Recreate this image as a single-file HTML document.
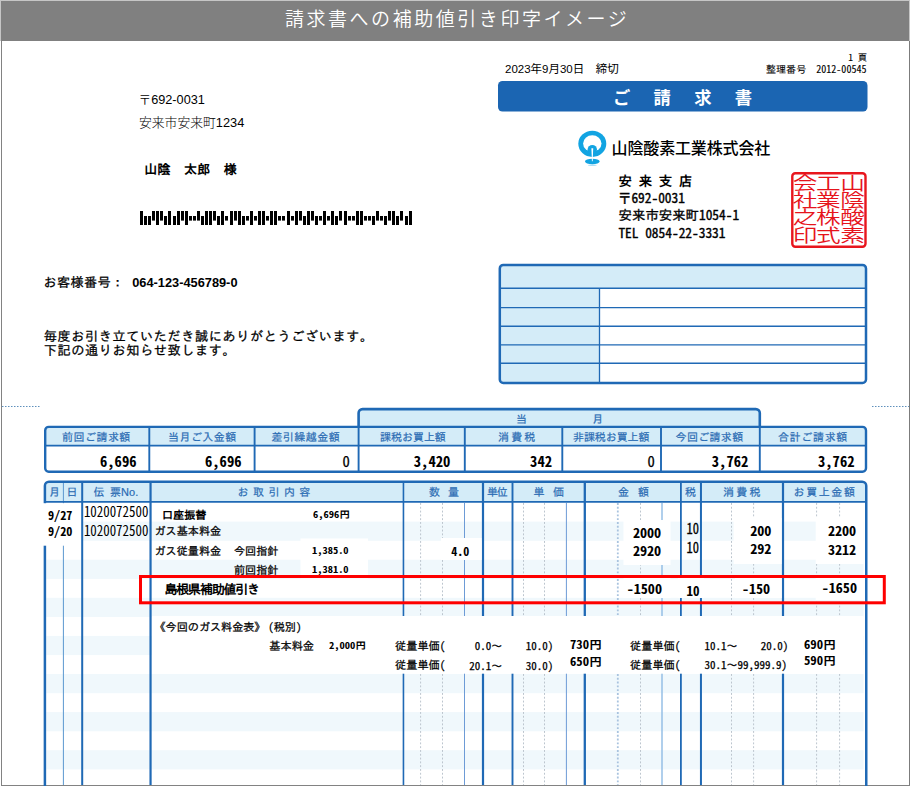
<!DOCTYPE html>
<html lang="ja"><head><meta charset="utf-8"><title>請求書への補助値引き印字イメージ</title>
<style>
html,body{margin:0;padding:0;background:#fff;}
#pg{position:relative;width:910px;height:786px;overflow:hidden;background:#fff;}
#pg svg{position:absolute;left:0;top:0;}
.t{position:absolute;white-space:pre;margin:0;padding:0;}
.n{font-family:'Noto Sans Mono CJK JP','IPAGothic',monospace;line-height:0;}
.a{font-family:'Liberation Sans',sans-serif;line-height:0;}
</style></head><body>
<div id="pg">
<svg width="910" height="786" viewBox="0 0 910 786">
<rect x="0" y="0" width="910" height="786" fill="#fff" />
<rect x="0" y="0" width="910" height="41" fill="#c6c6c6" />
<rect x="1" y="1" width="908" height="40" fill="#808080" />
<rect x="1" y="41" width="1" height="745" fill="#828282" />
<rect x="909" y="41" width="1" height="745" fill="#7c7c7c" />
<rect x="1" y="785" width="909" height="1" fill="#828282" />
<rect x="498" y="81" width="369.5" height="30.5" fill="#1b65b2" rx="4.5"/>
<g><ellipse cx="592.3" cy="143.8" rx="14" ry="13.1" fill="#12a4e2"/><ellipse cx="592.3" cy="143.5" rx="9.2" ry="8.3" fill="#fff"/><circle cx="592.3" cy="149.6" r="4.7" fill="#12a4e2"/><ellipse cx="592.3" cy="161.5" rx="7.3" ry="2.7" fill="#12a4e2"/><ellipse cx="592.3" cy="165.2" rx="4.5" ry="0.7" fill="#12a4e2" opacity="0.35"/><path d="M591.4 148.2H593.2L592.7 161.2H591.9z" fill="#fff"/></g>
<rect x="140" y="211" width="3" height="14" fill="#000" />
<rect x="144" y="216" width="3" height="9" fill="#000" />
<rect x="148" y="216" width="3" height="9" fill="#000" />
<rect x="152" y="211" width="3" height="9.6" fill="#000" />
<rect x="156" y="211" width="3" height="14" fill="#000" />
<rect x="160" y="211" width="3" height="9.6" fill="#000" />
<rect x="164" y="216" width="3" height="9" fill="#000" />
<rect x="168" y="211" width="3" height="14" fill="#000" />
<rect x="173" y="216" width="3" height="9" fill="#000" />
<rect x="177" y="211" width="3" height="14" fill="#000" />
<rect x="181" y="211" width="3" height="9.6" fill="#000" />
<rect x="185" y="211" width="3" height="14" fill="#000" />
<rect x="189" y="216" width="3" height="4.6" fill="#000" />
<rect x="193" y="216" width="3" height="4.6" fill="#000" />
<rect x="197" y="211" width="3" height="9.6" fill="#000" />
<rect x="201" y="216" width="3" height="9" fill="#000" />
<rect x="205" y="211" width="3" height="14" fill="#000" />
<rect x="209" y="211" width="3" height="14" fill="#000" />
<rect x="213" y="211" width="3" height="9.6" fill="#000" />
<rect x="217" y="216" width="3" height="9" fill="#000" />
<rect x="221" y="211" width="3" height="14" fill="#000" />
<rect x="225" y="216" width="3" height="4.6" fill="#000" />
<rect x="230" y="211" width="3" height="14" fill="#000" />
<rect x="234" y="211" width="3" height="9.6" fill="#000" />
<rect x="238" y="211" width="3" height="14" fill="#000" />
<rect x="242" y="216" width="3" height="9" fill="#000" />
<rect x="246" y="216" width="3" height="4.6" fill="#000" />
<rect x="250" y="211" width="3" height="14" fill="#000" />
<rect x="254" y="216" width="3" height="4.6" fill="#000" />
<rect x="258" y="211" width="3" height="14" fill="#000" />
<rect x="262" y="211" width="3" height="14" fill="#000" />
<rect x="266" y="216" width="3" height="4.6" fill="#000" />
<rect x="270" y="211" width="3" height="14" fill="#000" />
<rect x="274" y="211" width="3" height="14" fill="#000" />
<rect x="278" y="216" width="3" height="4.6" fill="#000" />
<rect x="282" y="216" width="3" height="4.6" fill="#000" />
<rect x="287" y="211" width="3" height="14" fill="#000" />
<rect x="291" y="216" width="3" height="4.6" fill="#000" />
<rect x="295" y="211" width="3" height="14" fill="#000" />
<rect x="299" y="211" width="3" height="9.6" fill="#000" />
<rect x="303" y="216" width="3" height="9" fill="#000" />
<rect x="307" y="211" width="3" height="14" fill="#000" />
<rect x="311" y="211" width="3" height="9.6" fill="#000" />
<rect x="315" y="216" width="3" height="9" fill="#000" />
<rect x="319" y="216" width="3" height="4.6" fill="#000" />
<rect x="323" y="211" width="3" height="14" fill="#000" />
<rect x="327" y="216" width="3" height="4.6" fill="#000" />
<rect x="331" y="211" width="3" height="14" fill="#000" />
<rect x="335" y="216" width="3" height="9" fill="#000" />
<rect x="339" y="211" width="3" height="9.6" fill="#000" />
<rect x="344" y="211" width="3" height="14" fill="#000" />
<rect x="348" y="216" width="3" height="4.6" fill="#000" />
<rect x="352" y="216" width="3" height="4.6" fill="#000" />
<rect x="356" y="211" width="3" height="14" fill="#000" />
<rect x="360" y="211" width="3" height="14" fill="#000" />
<rect x="364" y="216" width="3" height="4.6" fill="#000" />
<rect x="368" y="216" width="3" height="4.6" fill="#000" />
<rect x="372" y="216" width="3" height="9" fill="#000" />
<rect x="376" y="211" width="3" height="9.6" fill="#000" />
<rect x="380" y="216" width="3" height="4.6" fill="#000" />
<rect x="384" y="216" width="3" height="9" fill="#000" />
<rect x="388" y="211" width="3" height="9.6" fill="#000" />
<rect x="392" y="211" width="3" height="14" fill="#000" />
<rect x="396" y="216" width="3" height="9" fill="#000" />
<rect x="400" y="211" width="3" height="9.6" fill="#000" />
<rect x="405" y="216" width="3" height="9" fill="#000" />
<rect x="409" y="211" width="3" height="14" fill="#000" />
<rect x="499.8" y="264.9" width="366.2" height="118.10000000000002" fill="#fff" rx="4"/>
<path d="M499.8 268.9a4 4 0 0 1 4 -4H862.0a4 4 0 0 1 4 4V288H499.8z" fill="#d4ecf8"/>
<path d="M499.8 288H599.5V383.0H503.8a4 4 0 0 1 -4 -4z" fill="#d4ecf8"/>
<line x1="499.8" y1="288.2" x2="866.0" y2="288.2" stroke="#1f69b5" stroke-width="1.4" />
<line x1="499.8" y1="307.6" x2="866.0" y2="307.6" stroke="#1f69b5" stroke-width="1.4" />
<line x1="499.8" y1="326.3" x2="866.0" y2="326.3" stroke="#1f69b5" stroke-width="1.4" />
<line x1="499.8" y1="344.9" x2="866.0" y2="344.9" stroke="#1f69b5" stroke-width="1.4" />
<line x1="499.8" y1="363.3" x2="866.0" y2="363.3" stroke="#1f69b5" stroke-width="1.4" />
<line x1="599.5" y1="288" x2="599.5" y2="383.0" stroke="#1f69b5" stroke-width="1.3" />
<rect x="499.8" y="264.9" width="366.2" height="118.10000000000002" rx="3.5" fill="none" stroke="#1f69b5" stroke-width="2.5"/>
<line x1="2" y1="406.5" x2="41" y2="406.5" stroke="#5f90bc" stroke-width="1" stroke-dasharray="1.5 1.5"/>
<line x1="872" y1="406.5" x2="909" y2="406.5" stroke="#5f90bc" stroke-width="1" stroke-dasharray="1.5 1.5"/>
<path d="M358.6 430V413.1a4 4 0 0 1 4 -4H755.8a4 4 0 0 1 4 4V430z" fill="#d4ecf8" stroke="#1f69b5" stroke-width="2.6"/>
<rect x="45.2" y="426.9" width="820.8" height="44.80000000000001" fill="#fff" rx="4"/>
<path d="M45.2 445.6V430.9a4 4 0 0 1 4 -4H862.0a4 4 0 0 1 4 4V445.6z" fill="#d4ecf8"/>
<line x1="45.2" y1="445.6" x2="866.0" y2="445.6" stroke="#1f69b5" stroke-width="1.6" />
<line x1="149.3" y1="426.9" x2="149.3" y2="471.7" stroke="#1f69b5" stroke-width="1.9" />
<line x1="254.6" y1="426.9" x2="254.6" y2="471.7" stroke="#1f69b5" stroke-width="1.9" />
<line x1="358.6" y1="426.9" x2="358.6" y2="471.7" stroke="#1f69b5" stroke-width="1.9" />
<line x1="464.8" y1="426.9" x2="464.8" y2="471.7" stroke="#1f69b5" stroke-width="1.9" />
<line x1="562.3" y1="426.9" x2="562.3" y2="471.7" stroke="#1f69b5" stroke-width="1.9" />
<line x1="661.0" y1="426.9" x2="661.0" y2="471.7" stroke="#1f69b5" stroke-width="1.9" />
<line x1="759.8" y1="426.9" x2="759.8" y2="471.7" stroke="#1f69b5" stroke-width="1.9" />
<rect x="45.2" y="426.9" width="820.8" height="44.80000000000001" rx="3.5" fill="none" stroke="#1f69b5" stroke-width="2.4"/>
<rect x="46.3" y="521.6" width="817.3" height="19.2" fill="#f0f8fc" />
<rect x="46.3" y="559.7" width="817.3" height="19.2" fill="#f0f8fc" />
<rect x="46.3" y="597.8" width="817.3" height="19.2" fill="#f0f8fc" />
<rect x="46.3" y="635.9" width="817.3" height="19.2" fill="#f0f8fc" />
<rect x="46.3" y="674.0" width="817.3" height="19.2" fill="#f0f8fc" />
<rect x="46.3" y="712.1" width="817.3" height="19.2" fill="#f0f8fc" />
<rect x="46.3" y="750.2" width="817.3" height="19.2" fill="#f0f8fc" />
<path d="M44.9 501.8V485.8a4 4 0 0 1 4 -4H862.25a4 4 0 0 1 4 4V501.8z" fill="#d4ecf8"/>
<line x1="63.4" y1="481.8" x2="63.4" y2="785" stroke="#5b97cf" stroke-width="1" />
<line x1="464.5" y1="503" x2="464.5" y2="785" stroke="#6d9bd6" stroke-width="1" />
<line x1="566.4" y1="503" x2="566.4" y2="785" stroke="#6d9bd6" stroke-width="1" />
<line x1="662.0" y1="503" x2="662.0" y2="785" stroke="#8fbbe4" stroke-width="1.4" />
<line x1="420.6" y1="503" x2="420.6" y2="785" stroke="#bcc5ce" stroke-width="1" stroke-dasharray="1.9 1.9"/>
<line x1="442.5" y1="503" x2="442.5" y2="785" stroke="#bcc5ce" stroke-width="1" stroke-dasharray="1.9 1.9"/>
<line x1="523.5" y1="503" x2="523.5" y2="785" stroke="#bcc5ce" stroke-width="1" stroke-dasharray="1.9 1.9"/>
<line x1="544.5" y1="503" x2="544.5" y2="785" stroke="#bcc5ce" stroke-width="1" stroke-dasharray="1.9 1.9"/>
<line x1="640.5" y1="503" x2="640.5" y2="785" stroke="#bcc5ce" stroke-width="1" stroke-dasharray="1.9 1.9"/>
<line x1="731.5" y1="503" x2="731.5" y2="785" stroke="#bcc5ce" stroke-width="1" stroke-dasharray="1.9 1.9"/>
<line x1="753.6" y1="503" x2="753.6" y2="785" stroke="#bcc5ce" stroke-width="1" stroke-dasharray="1.9 1.9"/>
<line x1="816.6" y1="503" x2="816.6" y2="785" stroke="#bcc5ce" stroke-width="1" stroke-dasharray="1.9 1.9"/>
<line x1="839.6" y1="503" x2="839.6" y2="785" stroke="#bcc5ce" stroke-width="1" stroke-dasharray="1.9 1.9"/>
<line x1="617.8" y1="503" x2="617.8" y2="785" stroke="#a9c3df" stroke-width="1.8" stroke-dasharray="1.9 1.9"/>
<line x1="82.2" y1="481.8" x2="82.2" y2="785" stroke="#1f69b5" stroke-width="2.0" />
<line x1="150.55" y1="481.8" x2="150.55" y2="785" stroke="#1f69b5" stroke-width="2.2" />
<line x1="403.45" y1="481.8" x2="403.45" y2="785" stroke="#1f69b5" stroke-width="1.6" />
<line x1="483.0" y1="481.8" x2="483.0" y2="785" stroke="#1f69b5" stroke-width="2.2" />
<line x1="512.5" y1="481.8" x2="512.5" y2="785" stroke="#1f69b5" stroke-width="1.9" />
<line x1="584.8" y1="481.8" x2="584.8" y2="785" stroke="#1f69b5" stroke-width="2.3" />
<line x1="680.9" y1="481.8" x2="680.9" y2="785" stroke="#1f69b5" stroke-width="1.8" />
<line x1="700.95" y1="481.8" x2="700.95" y2="785" stroke="#1f69b5" stroke-width="2.0" />
<line x1="783.0" y1="481.8" x2="783.0" y2="785" stroke="#1f69b5" stroke-width="2.2" />
<line x1="44.9" y1="501.9" x2="866.25" y2="501.9" stroke="#1f69b5" stroke-width="1.7" />
<path d="M44.9 786V485.8a4 4 0 0 1 4 -4H862.25a4 4 0 0 1 4 4V786" fill="none" stroke="#1f69b5" stroke-width="2.5"/>
<rect x="40" y="503.2" width="41" height="42.5" fill="#fff" />
<rect x="152" y="616" width="711.5" height="57.7" fill="#fff" />
<rect x="300.5" y="538.5" width="67.5" height="40" fill="#fff" />
<rect x="623.5" y="520" width="47" height="45" fill="#fff" />
<rect x="441" y="538" width="40.5" height="22" fill="#fff" />
<rect x="733.6" y="518" width="48" height="46" fill="#fff" />
<rect x="815.7" y="518" width="48" height="46" fill="#fff" />
<rect x="623.5" y="578" width="47" height="20" fill="#fff" />
<rect x="678" y="577" width="26" height="21" fill="#fff" />
<rect x="735" y="578" width="46.6" height="20" fill="#fff" />
<rect x="815.7" y="578" width="48" height="22" fill="#fff" />
<rect x="140.5" y="576.5" width="743.8" height="26.3" fill="none" stroke="#fe0000" stroke-width="3"/>
<g><rect x="792.3" y="173.2" width="73.2" height="73.6" rx="3" fill="none" stroke="#e8161d" stroke-width="2.4"/></g>
<g font-family="'Liberation Sans','Noto Sans CJK JP',sans-serif" font-size="17" font-weight="350" fill="#e6141c"><text transform="translate(852.5 189.7) scale(1.45 1.04)" text-anchor="middle">山</text><text transform="translate(852.5 207.0) scale(1.45 1.04)" text-anchor="middle">陰</text><text transform="translate(852.5 224.3) scale(1.45 1.04)" text-anchor="middle">酸</text><text transform="translate(852.5 241.6) scale(1.45 1.04)" text-anchor="middle">素</text><text transform="translate(828.4 189.7) scale(1.45 1.04)" text-anchor="middle">工</text><text transform="translate(828.4 207.0) scale(1.45 1.04)" text-anchor="middle">業</text><text transform="translate(828.4 224.3) scale(1.45 1.04)" text-anchor="middle">株</text><text transform="translate(828.4 241.6) scale(1.45 1.04)" text-anchor="middle">式</text><text transform="translate(805.1 189.7) scale(1.45 1.04)" text-anchor="middle">会</text><text transform="translate(805.1 207.0) scale(1.45 1.04)" text-anchor="middle">社</text><text transform="translate(805.1 224.3) scale(1.45 1.04)" text-anchor="middle">之</text><text transform="translate(805.1 241.6) scale(1.45 1.04)" text-anchor="middle">印</text></g>
</svg>
<div class="t" style="top:7.2px;line-height:26.6px;font-size:19px;font-family:'Liberation Sans','Noto Sans CJK JP',sans-serif;color:#fff;letter-spacing:2.55px;left:257.1px;width:400px;text-align:center;font-weight:350;">請求書への補助値引き印字イメージ</div>
<div class="t" style="top:61.45px;line-height:16.1px;font-size:11.5px;font-family:'Liberation Sans','Noto Sans CJK JP',sans-serif;color:#000;left:505px;">2023年9月30日　締切</div>
<div class="t" style="top:51.45px;line-height:13.3px;font-size:9.5px;font-family:'IPAGothic','Liberation Mono',monospace;color:#000;right:42.8px;-webkit-text-stroke:0.1px #000;"><span class="n">1 </span>頁</div>
<div class="t" style="top:61.75px;line-height:14.1px;font-size:10.05px;font-family:'IPAGothic','Liberation Mono',monospace;color:#000;right:43.5px;-webkit-text-stroke:0.12px #000;">整理番号　<span class="n">2012-00545</span></div>
<div class="t" style="top:85.8px;line-height:24.2px;font-size:17.3px;font-family:'Liberation Sans','Noto Sans CJK JP',sans-serif;color:#fff;font-weight:bold;letter-spacing:3.0px;left:484px;width:400px;text-align:center;">ご　請　求　書</div>
<div class="t" style="top:138.1px;line-height:22.4px;font-size:16px;font-family:'Liberation Sans','Noto Sans CJK JP',sans-serif;color:#000;letter-spacing:-0.15px;left:611.6px;font-weight:500;">山陰酸素工業株式会社</div>
<div class="t" style="top:172.1px;line-height:18.8px;font-size:13.4px;font-family:'IPAGothic','Liberation Mono',monospace;color:#000;font-weight:bold;left:618.6px;">安<span class="n"> </span>来<span class="n"> </span>支<span class="n"> </span>店</div>
<div class="t" style="top:188.6px;line-height:18.8px;font-size:13.4px;font-family:'IPAGothic','Liberation Mono',monospace;color:#000;left:618px;-webkit-text-stroke:0.35px #000;">〒<span class="n">692-0031</span></div>
<div class="t" style="top:206.2px;line-height:18.8px;font-size:13.4px;font-family:'IPAGothic','Liberation Mono',monospace;color:#000;left:618.6px;-webkit-text-stroke:0.35px #000;">安来市安来町<span class="n">1054-1</span></div>
<div class="t" style="top:223.7px;line-height:18.8px;font-size:13.4px;font-family:'IPAGothic','Liberation Mono',monospace;color:#000;left:618.4px;-webkit-text-stroke:0.35px #000;"><span class="n">TEL 0854-22-3331</span></div>
<div class="t" style="top:92.4px;line-height:17.8px;font-size:12.7px;font-family:'Liberation Sans','Noto Sans CJK JP',sans-serif;color:#000;left:138.5px;font-weight:300;">〒692-0031</div>
<div class="t" style="top:114.05px;line-height:17.9px;font-size:12.8px;font-family:'Liberation Sans','Noto Sans CJK JP',sans-serif;color:#000;left:139px;font-weight:300;">安来市安来町1234</div>
<div class="t" style="top:161.1px;line-height:18.2px;font-size:13px;font-family:'IPAGothic','Liberation Mono',monospace;color:#000;font-weight:bold;letter-spacing:0.25px;left:144.3px;">山陰　太郎　様</div>
<div class="t" style="top:273.45px;line-height:18.5px;font-size:13.2px;font-family:'IPAGothic','Liberation Mono',monospace;color:#000;letter-spacing:0.3px;left:43.5px;-webkit-text-stroke:0.25px #000;">お客様番号：</div>
<div class="t" style="top:273.95px;line-height:17.9px;font-size:12.8px;font-family:'Liberation Sans','Noto Sans CJK JP',sans-serif;color:#000;font-weight:bold;left:132.2px;">064-123-456789-0</div>
<div class="t" style="top:327.15px;line-height:18.5px;font-size:13.2px;font-family:'IPAGothic','Liberation Mono',monospace;color:#000;letter-spacing:0.56px;left:43.7px;-webkit-text-stroke:0.25px #000;">毎度お引き立ていただき誠にありがとうございます。</div>
<div class="t" style="top:341.45px;line-height:18.5px;font-size:13.2px;font-family:'IPAGothic','Liberation Mono',monospace;color:#000;letter-spacing:0.56px;left:43.7px;-webkit-text-stroke:0.25px #000;">下記の通りお知らせ致します。</div>
<div class="t" style="top:410.8px;line-height:15.4px;font-size:11px;font-family:'IPAGothic','Liberation Mono',monospace;color:#2a6bb3;letter-spacing:0.6px;left:321.79999999999995px;width:400px;text-align:center;-webkit-text-stroke:0.2px #2a6bb3;">当</div>
<div class="t" style="top:410.8px;line-height:15.4px;font-size:11px;font-family:'IPAGothic','Liberation Mono',monospace;color:#2a6bb3;letter-spacing:0.6px;left:398.0999999999999px;width:400px;text-align:center;-webkit-text-stroke:0.2px #2a6bb3;">月</div>
<div class="t" style="top:429.1px;line-height:15.4px;font-size:11px;font-family:'IPAGothic','Liberation Mono',monospace;color:#2a6bb3;letter-spacing:0.45px;left:62.12px;-webkit-text-stroke:0.2px #2a6bb3;">前回ご請求額</div>
<div class="t" style="top:429.1px;line-height:15.4px;font-size:11px;font-family:'IPAGothic','Liberation Mono',monospace;color:#2a6bb3;letter-spacing:0.45px;left:168.02px;-webkit-text-stroke:0.2px #2a6bb3;">当月ご入金額</div>
<div class="t" style="top:429.1px;line-height:15.4px;font-size:11px;font-family:'IPAGothic','Liberation Mono',monospace;color:#2a6bb3;letter-spacing:0.45px;left:271.42px;-webkit-text-stroke:0.2px #2a6bb3;">差引繰越金額</div>
<div class="t" style="top:429.1px;line-height:15.4px;font-size:11px;font-family:'IPAGothic','Liberation Mono',monospace;color:#2a6bb3;letter-spacing:-0.05px;left:380.12px;-webkit-text-stroke:0.2px #2a6bb3;">課税お買上額</div>
<div class="t" style="top:429.1px;line-height:15.4px;font-size:11px;font-family:'IPAGothic','Liberation Mono',monospace;color:#2a6bb3;letter-spacing:2.03px;left:498.12px;-webkit-text-stroke:0.2px #2a6bb3;">消費税</div>
<div class="t" style="top:429.1px;line-height:15.4px;font-size:11px;font-family:'IPAGothic','Liberation Mono',monospace;color:#2a6bb3;letter-spacing:-0.12px;left:573.12px;-webkit-text-stroke:0.2px #2a6bb3;">非課税お買上額</div>
<div class="t" style="top:429.1px;line-height:15.4px;font-size:11px;font-family:'IPAGothic','Liberation Mono',monospace;color:#2a6bb3;letter-spacing:0.31px;left:675.62px;-webkit-text-stroke:0.2px #2a6bb3;">今回ご請求額</div>
<div class="t" style="top:429.1px;line-height:15.4px;font-size:11px;font-family:'IPAGothic','Liberation Mono',monospace;color:#2a6bb3;letter-spacing:0.69px;left:777.91px;-webkit-text-stroke:0.2px #2a6bb3;">合計ご請求額</div>
<div class="t" style="top:451.8px;line-height:20.4px;font-size:14.6px;font-family:'IPAGothic','Liberation Mono',monospace;color:#000;font-weight:bold;right:773.5px;"><span class="n">6,696</span></div>
<div class="t" style="top:451.8px;line-height:20.4px;font-size:14.6px;font-family:'IPAGothic','Liberation Mono',monospace;color:#000;font-weight:bold;right:668.5px;"><span class="n">6,696</span></div>
<div class="t" style="top:451.8px;line-height:20.4px;font-size:14.6px;font-family:'IPAGothic','Liberation Mono',monospace;color:#000;right:560.2px;-webkit-text-stroke:0.25px #000;"><span class="n">0</span></div>
<div class="t" style="top:451.8px;line-height:20.4px;font-size:14.6px;font-family:'IPAGothic','Liberation Mono',monospace;color:#000;font-weight:bold;right:459.7px;"><span class="n">3,420</span></div>
<div class="t" style="top:451.8px;line-height:20.4px;font-size:14.6px;font-family:'IPAGothic','Liberation Mono',monospace;color:#000;font-weight:bold;right:358px;"><span class="n">342</span></div>
<div class="t" style="top:451.8px;line-height:20.4px;font-size:14.6px;font-family:'IPAGothic','Liberation Mono',monospace;color:#000;right:255.2px;-webkit-text-stroke:0.25px #000;"><span class="n">0</span></div>
<div class="t" style="top:451.8px;line-height:20.4px;font-size:14.6px;font-family:'IPAGothic','Liberation Mono',monospace;color:#000;font-weight:bold;right:161.7px;"><span class="n">3,762</span></div>
<div class="t" style="top:451.8px;line-height:20.4px;font-size:14.6px;font-family:'IPAGothic','Liberation Mono',monospace;color:#000;font-weight:bold;right:55.5px;"><span class="n">3,762</span></div>
<div class="t" style="top:484.1px;line-height:15.4px;font-size:11px;font-family:'IPAGothic','Liberation Mono',monospace;color:#2a6bb3;left:-145.5px;width:400px;text-align:center;-webkit-text-stroke:0.2px #2a6bb3;">月</div>
<div class="t" style="top:484.1px;line-height:15.4px;font-size:11px;font-family:'IPAGothic','Liberation Mono',monospace;color:#2a6bb3;left:-127.9px;width:400px;text-align:center;-webkit-text-stroke:0.2px #2a6bb3;">日</div>
<div class="t" style="top:484.1px;line-height:15.4px;font-size:11px;font-family:'IPAGothic','Liberation Mono',monospace;color:#2a6bb3;left:490.4px;width:400px;text-align:center;-webkit-text-stroke:0.2px #2a6bb3;">税</div>
<div class="t" style="top:484.1px;line-height:15.4px;font-size:11px;font-family:'IPAGothic','Liberation Mono',monospace;color:#2a6bb3;left:93.6px;-webkit-text-stroke:0.2px #2a6bb3;">伝 票<span class="a">No.</span></div>
<div class="t" style="top:484.1px;line-height:15.4px;font-size:11px;font-family:'IPAGothic','Liberation Mono',monospace;color:#2a6bb3;letter-spacing:4.44px;left:237.62px;-webkit-text-stroke:0.2px #2a6bb3;">お取引内容</div>
<div class="t" style="top:484.1px;line-height:15.4px;font-size:11px;font-family:'IPAGothic','Liberation Mono',monospace;color:#2a6bb3;letter-spacing:7.97px;left:428.92px;-webkit-text-stroke:0.2px #2a6bb3;">数量</div>
<div class="t" style="top:484.1px;line-height:15.4px;font-size:11px;font-family:'IPAGothic','Liberation Mono',monospace;color:#2a6bb3;letter-spacing:-1.23px;left:486.92px;-webkit-text-stroke:0.2px #2a6bb3;">単位</div>
<div class="t" style="top:484.1px;line-height:15.4px;font-size:11px;font-family:'IPAGothic','Liberation Mono',monospace;color:#2a6bb3;letter-spacing:8.27px;left:533.62px;-webkit-text-stroke:0.2px #2a6bb3;">単価</div>
<div class="t" style="top:484.1px;line-height:15.4px;font-size:11px;font-family:'IPAGothic','Liberation Mono',monospace;color:#2a6bb3;letter-spacing:8.77px;left:618.12px;-webkit-text-stroke:0.2px #2a6bb3;">金額</div>
<div class="t" style="top:484.1px;line-height:15.4px;font-size:11px;font-family:'IPAGothic','Liberation Mono',monospace;color:#2a6bb3;letter-spacing:2.24px;left:722.91px;-webkit-text-stroke:0.2px #2a6bb3;">消費税</div>
<div class="t" style="top:484.1px;line-height:15.4px;font-size:11px;font-family:'IPAGothic','Liberation Mono',monospace;color:#2a6bb3;letter-spacing:1.57px;left:793.62px;-webkit-text-stroke:0.2px #2a6bb3;">お買上金額</div>
<div class="t" style="top:506.95px;line-height:17.1px;font-size:12.2px;font-family:'IPAGothic','Liberation Mono',monospace;color:#000;font-weight:bold;left:48px;"><span class="n">9/27</span></div>
<div class="t" style="top:523.05px;line-height:17.1px;font-size:12.2px;font-family:'IPAGothic','Liberation Mono',monospace;color:#000;font-weight:bold;left:48px;"><span class="n">9/20</span></div>
<div class="t" style="top:504.25px;line-height:18.1px;font-size:12.9px;font-family:'IPAGothic','Liberation Mono',monospace;color:#000;left:83.9px;transform:scale(1,1.1);transform-origin:left center;-webkit-text-stroke:0;"><span class="n">1020072500</span></div>
<div class="t" style="top:522.65px;line-height:18.1px;font-size:12.9px;font-family:'IPAGothic','Liberation Mono',monospace;color:#000;left:83.9px;transform:scale(1,1.1);transform-origin:left center;-webkit-text-stroke:0;"><span class="n">1020072500</span></div>
<div class="t" style="top:507.25px;line-height:15.5px;font-size:11.1px;font-family:'IPAGothic','Liberation Mono',monospace;color:#000;font-weight:bold;left:162px;">口座振替</div>
<div class="t" style="top:508.1px;line-height:13.4px;font-size:9.6px;font-family:'IPAGothic','Liberation Mono',monospace;color:#000;font-weight:bold;left:312.6px;transform:scale(1.1,1);transform-origin:left center;"><span class="n">6,696</span>円</div>
<div class="t" style="top:523.25px;line-height:15.5px;font-size:11.1px;font-family:'IPAGothic','Liberation Mono',monospace;color:#000;left:154.5px;-webkit-text-stroke:0.25px #000;">ガス基本料金</div>
<div class="t" style="top:543.25px;line-height:15.5px;font-size:11.1px;font-family:'IPAGothic','Liberation Mono',monospace;color:#000;left:154.5px;-webkit-text-stroke:0.25px #000;">ガス従量料金</div>
<div class="t" style="top:543.25px;line-height:15.5px;font-size:11.1px;font-family:'IPAGothic','Liberation Mono',monospace;color:#000;left:234px;-webkit-text-stroke:0.25px #000;">今回指針</div>
<div class="t" style="top:561.85px;line-height:15.5px;font-size:11.1px;font-family:'IPAGothic','Liberation Mono',monospace;color:#000;left:234px;-webkit-text-stroke:0.25px #000;">前回指針</div>
<div class="t" style="top:543.65px;line-height:13.3px;font-size:9.5px;font-family:'IPAGothic','Liberation Mono',monospace;color:#000;font-weight:bold;left:312.4px;transform:scale(1.1,1);transform-origin:left center;"><span class="n">1,385.0</span></div>
<div class="t" style="top:562.55px;line-height:13.3px;font-size:9.5px;font-family:'IPAGothic','Liberation Mono',monospace;color:#000;font-weight:bold;left:312.4px;transform:scale(1.1,1);transform-origin:left center;"><span class="n">1,381.0</span></div>
<div class="t" style="top:542.6px;line-height:16.8px;font-size:12px;font-family:'IPAGothic','Liberation Mono',monospace;color:#000;font-weight:bold;right:440.7px;"><span class="n">4.0</span></div>
<div class="t" style="top:524.0px;line-height:19.0px;font-size:13.6px;font-family:'IPAGothic','Liberation Mono',monospace;color:#000;font-weight:bold;right:248.7px;transform:scale(1.04,1);transform-origin:right center;"><span class="n">2000</span></div>
<div class="t" style="top:542.2px;line-height:19.0px;font-size:13.6px;font-family:'IPAGothic','Liberation Mono',monospace;color:#000;font-weight:bold;right:248.7px;transform:scale(1.04,1);transform-origin:right center;"><span class="n">2920</span></div>
<div class="t" style="top:521.3px;line-height:18.2px;font-size:13px;font-family:'IPAGothic','Liberation Mono',monospace;color:#000;right:210.8px;transform:scale(0.96,1.12);transform-origin:right center;-webkit-text-stroke:0.25px #000;"><span class="n">10</span></div>
<div class="t" style="top:540.3px;line-height:18.2px;font-size:13px;font-family:'IPAGothic','Liberation Mono',monospace;color:#000;right:210.8px;transform:scale(0.96,1.12);transform-origin:right center;-webkit-text-stroke:0.25px #000;"><span class="n">10</span></div>
<div class="t" style="top:522.2px;line-height:19.0px;font-size:13.6px;font-family:'IPAGothic','Liberation Mono',monospace;color:#000;font-weight:bold;right:138.6px;transform:scale(1.04,1);transform-origin:right center;"><span class="n">200</span></div>
<div class="t" style="top:540.4px;line-height:19.0px;font-size:13.6px;font-family:'IPAGothic','Liberation Mono',monospace;color:#000;font-weight:bold;right:138.6px;transform:scale(1.04,1);transform-origin:right center;"><span class="n">292</span></div>
<div class="t" style="top:522.2px;line-height:19.0px;font-size:13.6px;font-family:'IPAGothic','Liberation Mono',monospace;color:#000;font-weight:bold;right:53.4px;transform:scale(1.04,1);transform-origin:right center;"><span class="n">2200</span></div>
<div class="t" style="top:541.2px;line-height:19.0px;font-size:13.6px;font-family:'IPAGothic','Liberation Mono',monospace;color:#000;font-weight:bold;right:53.4px;transform:scale(1.04,1);transform-origin:right center;"><span class="n">3212</span></div>
<div class="t" style="top:580.7px;line-height:18.2px;font-size:13px;font-family:'IPAGothic','Liberation Mono',monospace;color:#000;font-weight:bold;letter-spacing:-1.2px;left:164.5px;">島根県補助値引き</div>
<div class="t" style="top:580.4px;line-height:19.0px;font-size:13.6px;font-family:'IPAGothic','Liberation Mono',monospace;color:#000;font-weight:bold;right:248px;transform:scale(1.04,1);transform-origin:right center;"><span class="n">-1500</span></div>
<div class="t" style="top:582.7px;line-height:18.2px;font-size:13px;font-family:'IPAGothic','Liberation Mono',monospace;color:#000;font-weight:bold;right:210.4px;"><span class="n">10</span></div>
<div class="t" style="top:580.2px;line-height:19.0px;font-size:13.6px;font-family:'IPAGothic','Liberation Mono',monospace;color:#000;font-weight:bold;right:140.3px;transform:scale(1.04,1);transform-origin:right center;"><span class="n">-150</span></div>
<div class="t" style="top:579.2px;line-height:19.0px;font-size:13.6px;font-family:'IPAGothic','Liberation Mono',monospace;color:#000;font-weight:bold;right:53px;transform:scale(1.04,1);transform-origin:right center;"><span class="n">-1650</span></div>
<div class="t" style="top:619.25px;line-height:15.5px;font-size:11.1px;font-family:'IPAGothic','Liberation Mono',monospace;color:#000;left:154.5px;-webkit-text-stroke:0.25px #000;">《今回のガス料金表》</div>
<div class="t" style="top:619.25px;line-height:15.5px;font-size:11.1px;font-family:'IPAGothic','Liberation Mono',monospace;color:#000;left:268.2px;-webkit-text-stroke:0.25px #000;"><span class="n">(</span>税別<span class="n">)</span></div>
<div class="t" style="top:638.15px;line-height:15.7px;font-size:11.2px;font-family:'IPAGothic','Liberation Mono',monospace;color:#000;left:269.3px;-webkit-text-stroke:0.25px #000;">基本料金</div>
<div class="t" style="top:639.3px;line-height:13.4px;font-size:9.6px;font-family:'IPAGothic','Liberation Mono',monospace;color:#000;font-weight:bold;left:328.6px;transform:scale(1.1,1);transform-origin:left center;"><span class="n">2,000</span>円</div>
<div class="t" style="top:638.15px;line-height:15.7px;font-size:11.2px;font-family:'IPAGothic','Liberation Mono',monospace;color:#000;left:395px;-webkit-text-stroke:0.25px #000;">従量単価<span class="n">(</span></div>
<div class="t" style="top:657.45px;line-height:15.7px;font-size:11.2px;font-family:'IPAGothic','Liberation Mono',monospace;color:#000;left:395px;-webkit-text-stroke:0.25px #000;">従量単価<span class="n">(</span></div>
<div class="t" style="top:638.3px;line-height:15.4px;font-size:11px;font-family:'IPAGothic','Liberation Mono',monospace;color:#000;right:407.7px;-webkit-text-stroke:0.25px #000;"><span class="n">0.0</span>～</div>
<div class="t" style="top:657.6px;line-height:15.4px;font-size:11px;font-family:'IPAGothic','Liberation Mono',monospace;color:#000;right:407.7px;-webkit-text-stroke:0.25px #000;"><span class="n">20.1</span>～</div>
<div class="t" style="top:638.3px;line-height:15.4px;font-size:11px;font-family:'IPAGothic','Liberation Mono',monospace;color:#000;right:356.7px;-webkit-text-stroke:0.25px #000;"><span class="n">10.0)</span></div>
<div class="t" style="top:657.6px;line-height:15.4px;font-size:11px;font-family:'IPAGothic','Liberation Mono',monospace;color:#000;right:356.7px;-webkit-text-stroke:0.25px #000;"><span class="n">30.0)</span></div>
<div class="t" style="top:637.4px;line-height:16.4px;font-size:11.7px;font-family:'IPAGothic','Liberation Mono',monospace;color:#000;font-weight:bold;left:570.3px;transform:scale(1.09,1);transform-origin:left center;"><span class="n">730</span>円</div>
<div class="t" style="top:653.9px;line-height:16.4px;font-size:11.7px;font-family:'IPAGothic','Liberation Mono',monospace;color:#000;font-weight:bold;left:570.3px;transform:scale(1.09,1);transform-origin:left center;"><span class="n">650</span>円</div>
<div class="t" style="top:638.15px;line-height:15.7px;font-size:11.2px;font-family:'IPAGothic','Liberation Mono',monospace;color:#000;left:630px;-webkit-text-stroke:0.25px #000;">従量単価<span class="n">(</span></div>
<div class="t" style="top:657.45px;line-height:15.7px;font-size:11.2px;font-family:'IPAGothic','Liberation Mono',monospace;color:#000;left:630px;-webkit-text-stroke:0.25px #000;">従量単価<span class="n">(</span></div>
<div class="t" style="top:638.1px;line-height:15.4px;font-size:11px;font-family:'IPAGothic','Liberation Mono',monospace;color:#000;left:704.5px;-webkit-text-stroke:0.25px #000;"><span class="n">10.1</span>～</div>
<div class="t" style="top:638.1px;line-height:15.4px;font-size:11px;font-family:'IPAGothic','Liberation Mono',monospace;color:#000;right:121.7px;-webkit-text-stroke:0.25px #000;"><span class="n">20.0)</span></div>
<div class="t" style="top:657.3px;line-height:15.4px;font-size:11px;font-family:'IPAGothic','Liberation Mono',monospace;color:#000;left:704.5px;-webkit-text-stroke:0.25px #000;"><span class="n">30.1</span>～<span class="n">99,999.9)</span></div>
<div class="t" style="top:637.1px;line-height:16.4px;font-size:11.7px;font-family:'IPAGothic','Liberation Mono',monospace;color:#000;font-weight:bold;left:804.3px;transform:scale(1.09,1);transform-origin:left center;"><span class="n">690</span>円</div>
<div class="t" style="top:652.6px;line-height:16.4px;font-size:11.7px;font-family:'IPAGothic','Liberation Mono',monospace;color:#000;font-weight:bold;left:804.3px;transform:scale(1.09,1);transform-origin:left center;"><span class="n">590</span>円</div>
</div>
</body></html>
